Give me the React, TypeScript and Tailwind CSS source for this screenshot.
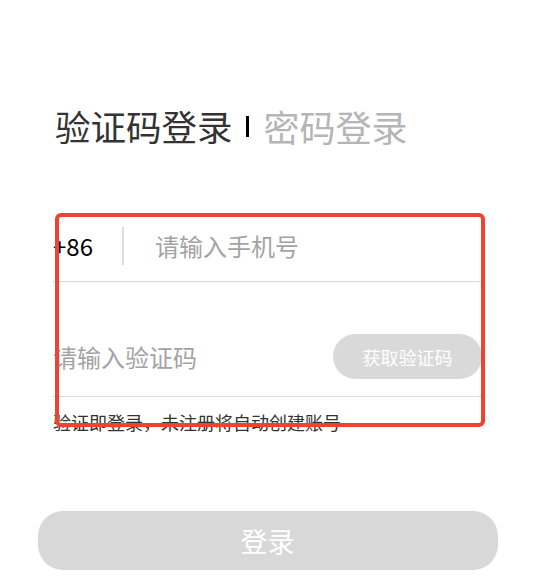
import { useState } from "react";

export default function App() {
    const [phone, setPhone] = useState("");
    const [code, setCode] = useState("");

    return (
        <div
            className="relative min-h-[587px] w-full bg-white"
            style={{ fontFamily: '"Noto Sans CJK SC", "Noto Sans", sans-serif' }}
        >
            {/* Tabs */}
            <div className="flex items-center pl-[55px] pt-[108px]">
                <span className="text-[35.5px] leading-none text-[#333333]">验证码登录</span>
                <span className="ml-[13px] mr-[15px] h-[21px] w-[3px] bg-black" />
                <span className="text-[36px] leading-none text-[#b5b5b5]">密码登录</span>
            </div>

            <div className="px-[53px]">
                {/* Phone */}
                <div className="mt-[70px] flex h-[67px] items-center pb-[4px]">
                    <span className="w-[69px] text-[24px] leading-none text-black">+86</span>
                    <span className="h-[38px] w-[2px] bg-[#dedede]" />
                    <input
                        value={phone}
                        onChange={(e) => setPhone(e.target.value)}
                        placeholder="请输入手机号"
                        className="ml-[31px] flex-1 bg-transparent text-[24px] leading-none text-[#333] outline-none placeholder:text-[#a3a3a3]"
                    />
                </div>
                <div className="h-px bg-[#d9d9d9]" />

                {/* Code */}
                <div className="flex h-[114px] items-center pt-[35px]">
                    <input
                        value={code}
                        onChange={(e) => setCode(e.target.value)}
                        placeholder="请输入验证码"
                        className="min-w-0 flex-1 bg-transparent text-[24px] leading-none text-[#333] outline-none placeholder:text-[#a3a3a3]"
                    />
                    <button className="h-[45px] w-[149px] rounded-full bg-[#d9d9d9] text-[18px] leading-none text-white">
                        获取验证码
                    </button>
                </div>
                <div className="h-px bg-[#d9d9d9]" />

                <p className="mt-[16px] text-[18px] leading-none text-[#333333]">
                    验证即登录，未注册将自动创建账号
                </p>
            </div>

            {/* Submit */}
            <button className="mx-auto mt-[80px] flex h-[59px] w-[460px] items-center justify-center rounded-[25px] bg-[#d8d8d8] text-[27px] leading-none text-white">
                登录
            </button>

            {/* Highlight overlay */}
            <div className="pointer-events-none absolute left-[55px] top-[213px] h-[214px] w-[430px] rounded-[6px] border-4 border-[#ee4330]" />
        </div>
    );
}
